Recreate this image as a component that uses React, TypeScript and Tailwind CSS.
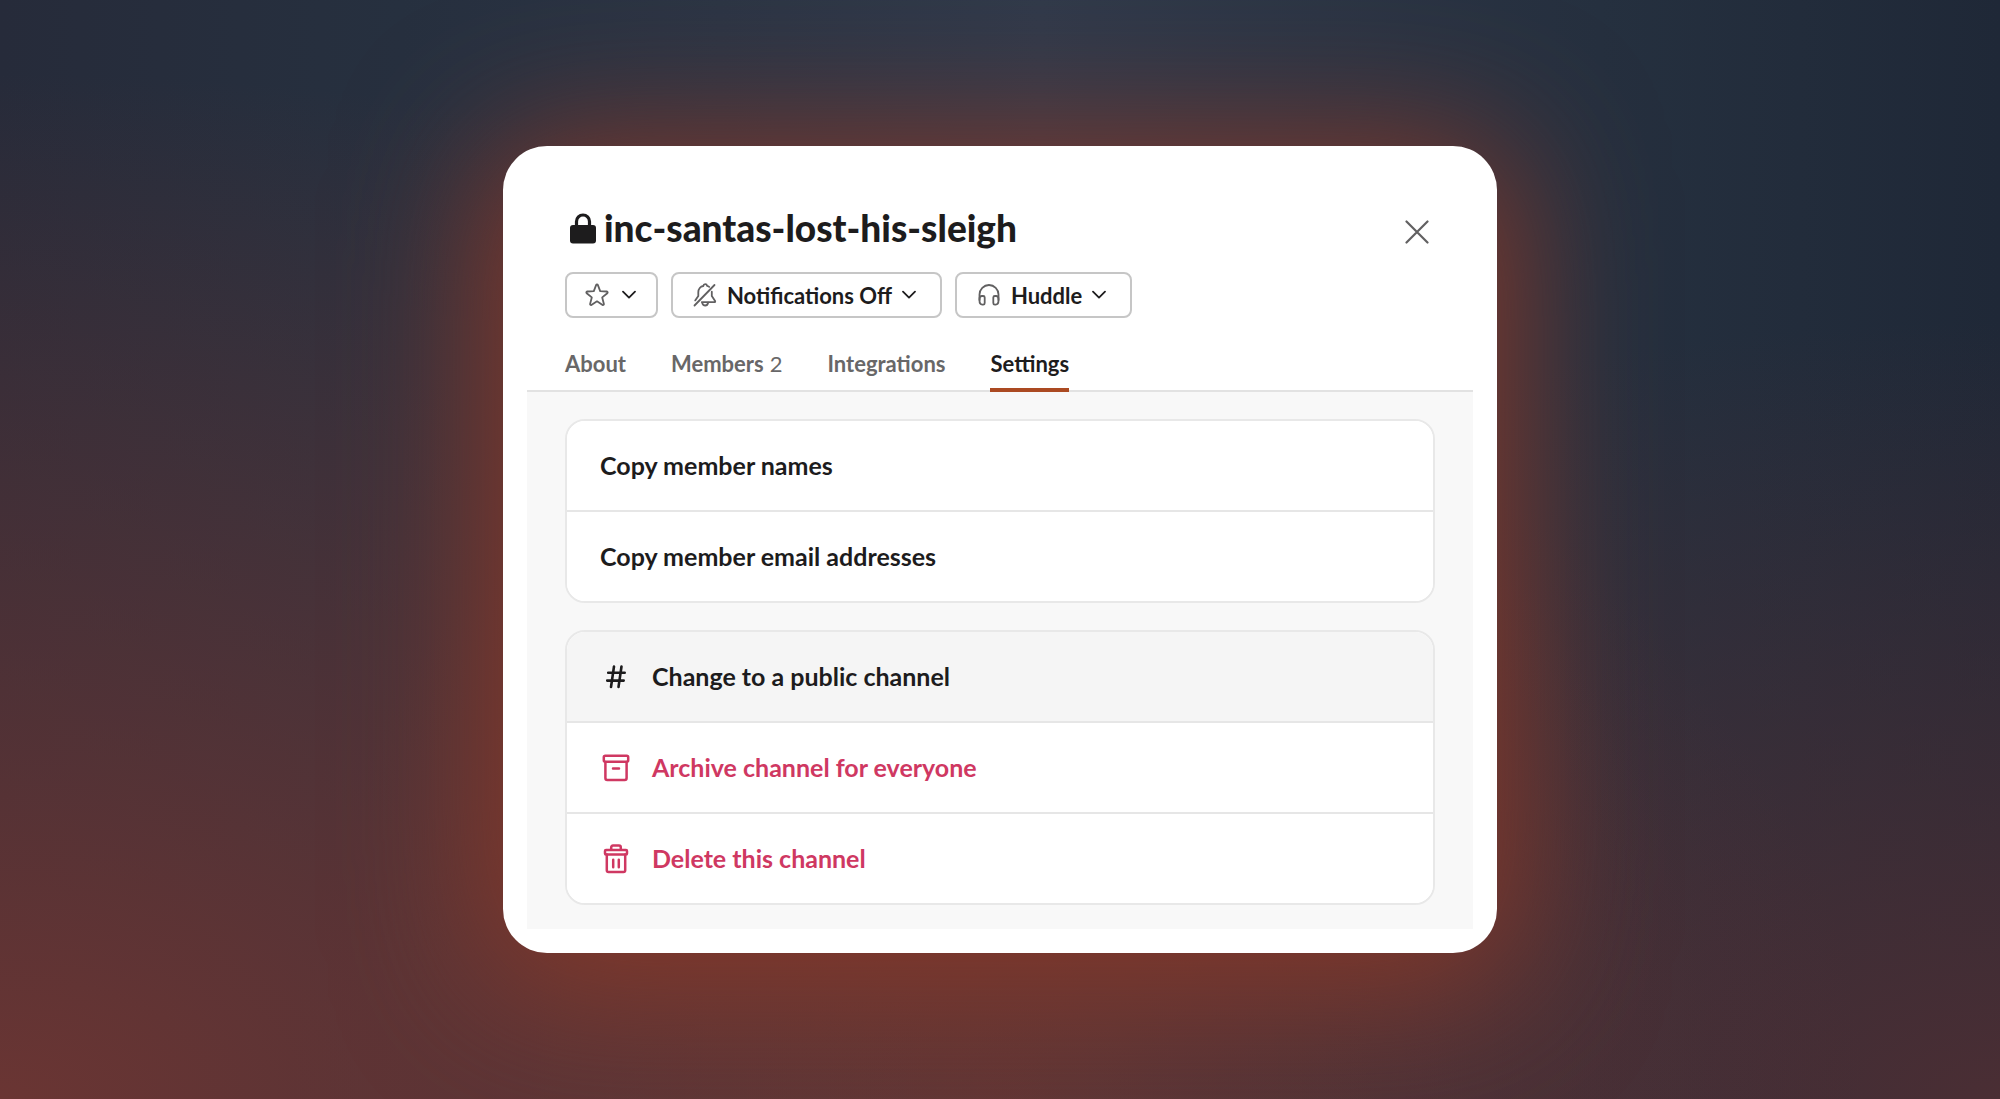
import { useState } from 'react';
import type { ReactNode } from 'react';

const ChevronIcon = () => (
  <svg width="14" height="10" viewBox="0 0 14 10" fill="none" stroke="#1d1c1d" strokeWidth="1.8" strokeLinecap="round" strokeLinejoin="round" aria-hidden="true">
    <path d="M1 1.6 7 7.6l6-6" />
  </svg>
);

const LockIcon = () => (
  <svg width="26" height="31" viewBox="0 0 26 31" aria-hidden="true">
    <path d="M6.5 14V8.5a6.5 6.5 0 0 1 13 0V14" fill="none" stroke="#1d1c1d" strokeWidth="3.2" />
    <rect x="0" y="12" width="26" height="18.5" rx="3" fill="#1d1c1d" />
  </svg>
);

const CloseIcon = () => (
  <svg width="24" height="24" viewBox="0 0 24 24" fill="none" stroke="#616061" strokeWidth="2.2" strokeLinecap="round" aria-hidden="true">
    <path d="m1.5 1.5 21 21M22.5 1.5l-21 21" />
  </svg>
);

const StarIcon = () => (
  <svg width="24" height="24" viewBox="0 0 24 24" fill="none" stroke="#616061" strokeWidth="1.8" strokeLinejoin="round" aria-hidden="true">
    <path d="M11.2 1.9c.3-.8 1.3-.8 1.6 0l2.4 6.2 6.6.4c.9.1 1.2 1.1.5 1.7l-5.1 4.2 1.7 6.5c.2.8-.6 1.4-1.3 1L12 18.3l-5.6 3.6c-.7.4-1.5-.2-1.3-1l1.7-6.5-5.1-4.2c-.7-.6-.4-1.6.5-1.7l6.6-.4z" />
  </svg>
);

const BellOffIcon = () => (
  <svg width="24" height="24" viewBox="0 0 24 24" fill="none" stroke="#616061" strokeWidth="1.8" strokeLinecap="round" strokeLinejoin="round" aria-hidden="true">
    <path d="M1.5 22.5 21.5 2" />
    <path d="M2.2 17.4 5.3 13V9.2C5.3 6 7.5 3.4 10.3 3c.2-1.3.9-1.8 1.9-1.8s1.7.5 1.9 1.6c.8.2 1.5.6 2.1 1.1" />
    <path d="M18.8 8.7V13l3.3 5c.3.5 0 1.1-.6 1.1H8.8" />
    <path d="M9.3 20.2c.5 1.5 1.5 2.3 2.9 2.3s2.5-.9 2.9-2.8" />
  </svg>
);

const HeadphonesIcon = () => (
  <svg width="24" height="22" viewBox="-1 0 24 22" fill="none" stroke="#616061" strokeWidth="1.8" strokeLinejoin="round" aria-hidden="true">
    <path d="M1.5 16.5v-6a9.5 9.5 0 0 1 19 0v6" />
    <path d="M1.5 15c0-2 .7-3 2.4-3h1.2c1 0 1.6.5 1.6 1.5V19c0 1-.5 1.6-1.5 1.6h-.9c-2 0-2.800-1.400-2.800-4zM20.500 15c0-2-.7-3-2.400-3h-1.200c-1 0-1.600.5-1.600 1.500V19c0 1 .5 1.600 1.500 1.600h.9c2 0 2.800-1.400 2.800-4z" />
  </svg>
);

const HashIcon = () => (
  <svg width="28" height="28" viewBox="0 0 28 28" fill="none" stroke="#1d1c1d" strokeWidth="2.6" strokeLinecap="round" aria-hidden="true">
    <path d="M12 3.5 9 24M19.500 3.500 16.500 24M6.200 9.800h16.500M5.200 17.600h16.500" />
  </svg>
);

const ArchiveIcon = () => (
  <svg width="28" height="28" viewBox="0 0 28 28" fill="none" stroke="currentColor" strokeWidth="2.5" strokeLinecap="round" strokeLinejoin="round" aria-hidden="true">
    <rect x="1.8" y="1.8" width="24.4" height="6" rx="1.5" />
    <path d="M3.4 8v16c0 1.3.6 2 1.9 2h17.4c1.3 0 1.9-.7 1.9-2V8M11 14.500h6" />
  </svg>
);

const TrashIcon = () => (
  <svg width="28" height="30" viewBox="0 0 28 30" fill="none" stroke="currentColor" strokeWidth="2.5" strokeLinecap="round" strokeLinejoin="round" aria-hidden="true">
    <path d="M9.2 5.8V3.4c0-1.2.6-1.8 1.8-1.8h6c1.2 0 1.8.6 1.8 1.8v2.4" />
    <rect x="3" y="6" width="22" height="4.5" rx="1" />
    <path d="M4.8 10.5v15.7c0 1.2.6 1.8 1.8 1.8h14.8c1.2 0 1.8-.6 1.8-1.8V10.5M11.2 15.8v7.400M16.800 15.800v7.400" />
  </svg>
);

type RowProps = {
  label: string;
  icon?: ReactNode;
  danger?: boolean;
  active?: boolean;
};

function Row({ label, icon, danger, active }: RowProps) {
  return (
    <li>
      <button
        type="button"
        className={`flex h-[89px] w-full cursor-pointer items-center px-[33px] text-left text-[25px] font-bold hover:bg-[#f5f5f5] ${
          danger ? 'text-[#cf3862]' : 'text-[#1d1c1d]'
        } ${active ? 'bg-[#f5f5f5]' : 'bg-white'}`}
      >
        {icon && <span className="mr-5 flex w-8 justify-center">{icon}</span>}
        {label}
      </button>
    </li>
  );
}

function RowGroup({ children }: { children: ReactNode }) {
  return (
    <ul className="divide-y-2 divide-[#e6e6e6] overflow-hidden rounded-[20px] border-2 border-[#e8e8e8] bg-white">
      {children}
    </ul>
  );
}

const tabs = [
  { name: 'About' },
  { name: 'Members', count: 2 },
  { name: 'Integrations' },
  { name: 'Settings' },
];

const actionClass =
  'flex h-[46px] cursor-pointer items-center rounded-lg border-2 border-[#c6c6c6] bg-white text-[22px] font-bold';

export default function App() {
  const [tab, setTab] = useState<string>('Settings');

  return (
    <main className="flex min-h-screen items-center justify-center overflow-hidden bg-[radial-gradient(ellipse_at_0%_100%,#6a3533_0%,#6a353300_66%),radial-gradient(ellipse_at_100%_100%,#4a2e34_0%,#4a2e3400_50%),radial-gradient(ellipse_at_50%_100%,#5e3a38_0%,#5e3a3800_50%),linear-gradient(to_right,#262b3a,#26303f_20%,#303a4b_52%,#25303f_80%,#1f2837)] p-6 font-['Lato',sans-serif] text-[#1d1c1d]">
      <section
        role="dialog"
        aria-labelledby="channel-name"
        className="w-full max-w-[994px] rounded-[44px] bg-white p-6 shadow-[0_16px_140px_20px_#84382a]"
      >
        <header className="px-[38px] pt-[34px]">
          <div className="flex items-center justify-between">
            <h1 id="channel-name" className="flex items-center gap-2 pl-[5px] text-[37px] leading-[48px] font-black">
              <LockIcon />
              inc-santas-lost-his-sleigh
            </h1>
            <button type="button" aria-label="Close" className="cursor-pointer pt-2 pr-1.5">
              <CloseIcon />
            </button>
          </div>
          <div className="mt-5 flex gap-[13px]">
            <button type="button" aria-label="Star channel" className={`${actionClass} gap-[13px] pr-5 pl-[18px]`}>
              <StarIcon />
              <ChevronIcon />
            </button>
            <button type="button" className={`${actionClass} gap-2.5 pr-6 pl-5`}>
              <BellOffIcon />
              Notifications Off
              <ChevronIcon />
            </button>
            <button type="button" className={`${actionClass} gap-2.5 pr-6 pl-5`}>
              <HeadphonesIcon />
              Huddle
              <ChevronIcon />
            </button>
          </div>
        </header>

        <div role="tablist" className="flex gap-[45px] border-b-2 border-[#e2e2e2] px-[38px] pt-6">
          {tabs.map((item) => (
            <button
              key={item.name}
              type="button"
              role="tab"
              aria-selected={tab === item.name}
              onClick={() => setTab(item.name)}
              className={`-mb-0.5 h-[50px] cursor-pointer border-b-4 pb-1 text-[22px] font-bold ${
                tab === item.name ? 'border-[#ab4a22] text-[#1d1c1d]' : 'border-transparent text-[#686768]'
              }`}
            >
              {item.name}
              {item.count && <span className="ml-1.5 font-normal">{item.count}</span>}
            </button>
          ))}
        </div>

        <div role="tabpanel" className="flex flex-col gap-[27px] bg-[#f8f8f8] px-[38px] pt-[27px] pb-6">
          <RowGroup>
            <Row label="Copy member names" />
            <Row label="Copy member email addresses" />
          </RowGroup>
          <RowGroup>
            <Row label="Change to a public channel" icon={<HashIcon />} active />
            <Row label="Archive channel for everyone" icon={<ArchiveIcon />} danger />
            <Row label="Delete this channel" icon={<TrashIcon />} danger />
          </RowGroup>
        </div>
      </section>
    </main>
  );
}
